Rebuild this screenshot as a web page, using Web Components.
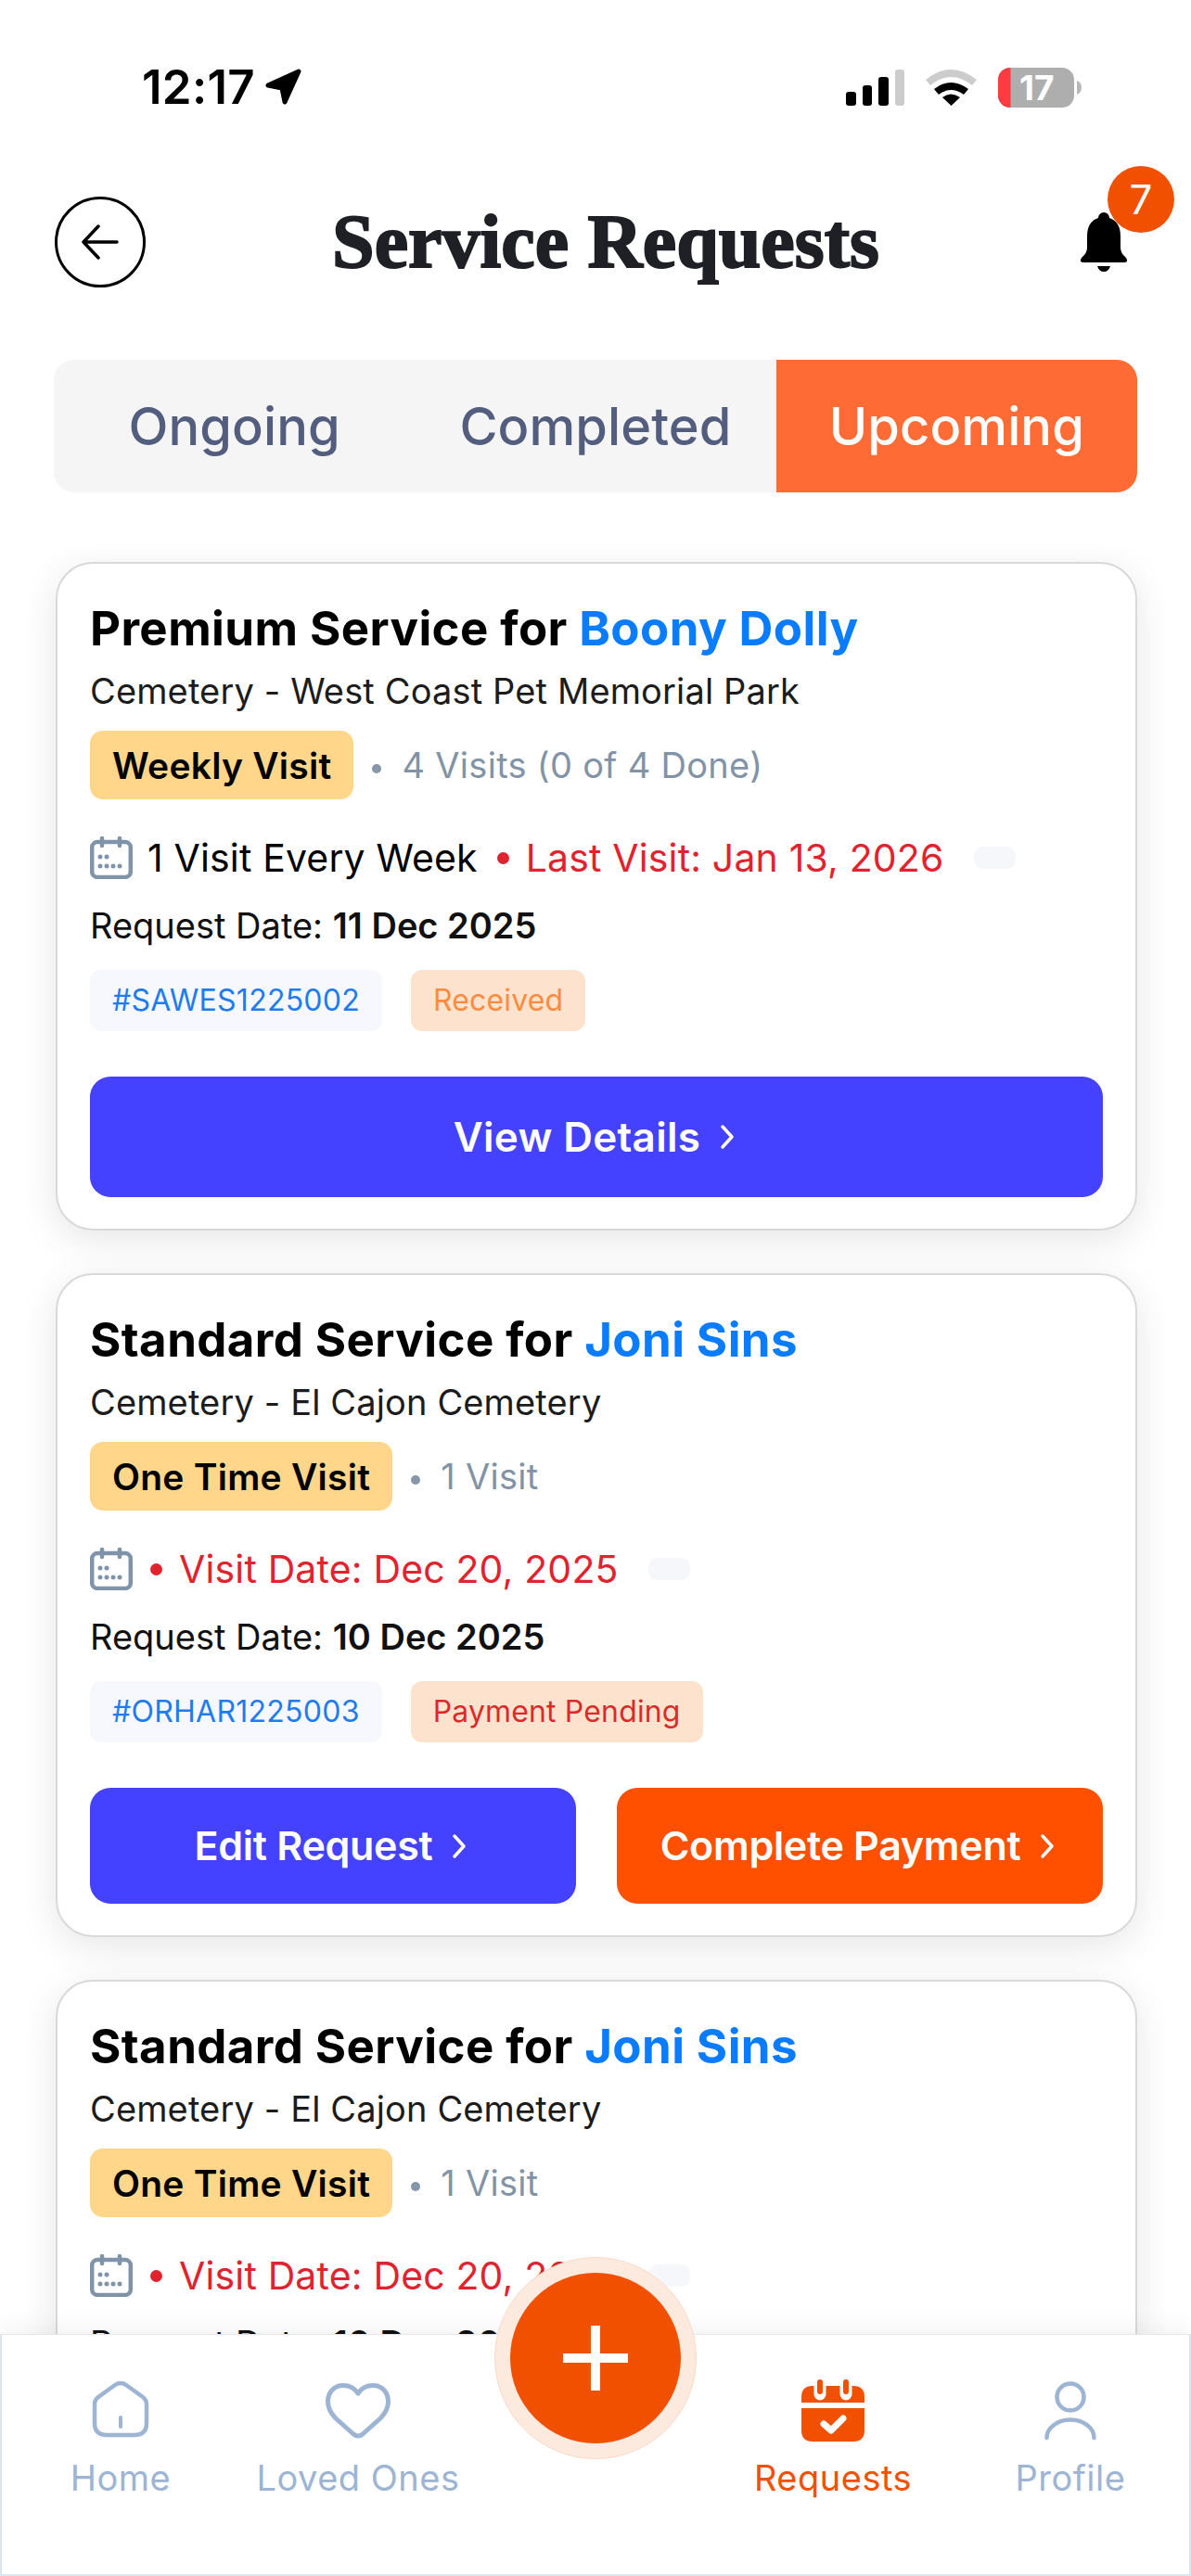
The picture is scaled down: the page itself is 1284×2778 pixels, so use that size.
<!DOCTYPE html>
<html lang="en"><head><meta charset="utf-8"><title>Service Requests</title>
<style>
html,body{margin:0;padding:0;background:#fff}
body{font-family:Inter,"Noto Sans",sans-serif;color:#111}
</style></head><body>
<app-screen>
  <status-bar></status-bar>
  <app-header title="Service Requests" count="7"></app-header>
  <seg-tabs></seg-tabs>
  <card-list>
    <request-card plan="Premium Service for " name="Boony Dolly" place="Cemetery - West Coast Pet Memorial Park" chip="Weekly Visit" visits="4 Visits (0 of 4 Done)" every="1 Visit Every Week" red="Last Visit: Jan 13, 2026" date="11 Dec 2025" code="#SAWES1225002" state="Received" state-color="#fb8b3e">
      <action-button big>View Details</action-button>
    </request-card>
    <request-card plan="Standard Service for " name="Joni Sins" place="Cemetery - El Cajon Cemetery" chip="One Time Visit" visits="1 Visit" red="Visit Date: Dec 20, 2025" date="10 Dec 2025" code="#ORHAR1225003" state="Payment Pending" state-color="#d92b2b">
      <action-button>Edit Request</action-button>
      <action-button color="#ff5000">Complete Payment</action-button>
    </request-card>
    <request-card plan="Standard Service for " name="Joni Sins" place="Cemetery - El Cajon Cemetery" chip="One Time Visit" visits="1 Visit" red="Visit Date: Dec 20, 2025" date="10 Dec 2025" code="#ORHAR1225003" state="Payment Pending" state-color="#d92b2b">
      <action-button>Edit Request</action-button>
      <action-button color="#ff5000">Complete Payment</action-button>
    </request-card>
  </card-list>
  <bottom-nav>
    <nav-item label="Home"><svg viewBox="0 0 66 64" width="66" height="64" fill="none" stroke="#9db4d3" stroke-width="4.500" stroke-linejoin="round" stroke-linecap="round"><path d="M5 25 Q5 20 9 17 L27 4 Q33 0 39 4 L57 17 Q61 20 61 25 V45 Q61 58 48 58 H18 Q5 58 5 45Z"/><path d="M33 39V49" stroke-width="4"/></svg></nav-item>
    <nav-item label="Loved Ones"><svg viewBox="0 0 72 62" width="72" height="62" fill="none" stroke="#9db4d3" stroke-width="5" stroke-linejoin="round"><path d="M36 12 C32 6 26 3.500 20 3.500 C10 3.500 3.500 11 3.500 21 C3.500 29 7 34 12 39 L31 56 Q36 60 41 56 L60 39 C65 34 68.500 29 68.500 21 C68.500 11 62 3.500 52 3.500 C46 3.500 40 6 36 12Z"/></svg></nav-item>
    <nav-item></nav-item>
    <nav-item label="Requests" active><svg viewBox="0 0 68 68" width="68" height="68"><path fill="#f15000" d="M12 7H56Q68 7 68 19V25H0V19Q0 7 12 7ZM0 31H68V55Q68 67 56 67H12Q0 67 0 55Z"/><path d="M20 4V16M48 4V16" stroke="#fff" stroke-width="13" stroke-linecap="round"/><path d="M20 3V13M48 3V13" stroke="#f15000" stroke-width="6" stroke-linecap="round"/><path d="M24 48L32 55L45 42" fill="none" stroke="#fff" stroke-width="7" stroke-linecap="round" stroke-linejoin="round"/></svg></nav-item>
    <nav-item label="Profile"><svg viewBox="0 0 56 64" width="56" height="64" fill="none" stroke="#9db4d3" stroke-width="4.500" stroke-linecap="round"><circle cx="28" cy="17" r="14.500"/><path d="M2.500 61A25.500 19.500 0 0 1 53.500 61"/></svg></nav-item>
  </bottom-nav>
  <fab-button></fab-button>
</app-screen>
<script>
const def=(name,css,html)=>customElements.define(name,class extends HTMLElement{
  connectedCallback(){
    if(this.shadowRoot)return;
    const a=n=>this.getAttribute(n)||'';
    const r=this.attachShadow({mode:'open'});
    r.innerHTML='<style>'+css+'</style>'+(typeof html==='function'?html(a,this):html);
  }
});
def('app-screen',`:host{display:block;position:relative;width:1284px;height:2778px;overflow:hidden;background:#fff}`,`<slot></slot>`);
def('status-bar',`:host{display:flex;justify-content:space-between;align-items:center;height:120px;padding:68px 118px 0 153px;box-sizing:border-box}
.l,.r{display:flex;align-items:center}
.t{font:600 51px/56px Inter,sans-serif;letter-spacing:.3px;color:#000}
.l svg{margin-left:11px}
.r{gap:23px}
.bat{position:relative;width:90px;height:43px}
.bat b{position:absolute;left:14px;top:0;width:66px;height:43px;font:700 37px/43px Inter,sans-serif;color:#fff;text-align:left;padding-left:9px;box-sizing:border-box}`,
`<div class="l"><span class="t">12:17</span><svg width="42" height="42" viewBox="0 0 42 42"><path d="M3 19L36 4L21 37L18 22Z" fill="#000" stroke="#000" stroke-width="5" stroke-linejoin="round"/></svg></div>
<div class="r">
<svg width="63" height="39" viewBox="0 0 63 39"><rect x="0" y="24" width="11" height="15" rx="3"/><rect x="18" y="17" width="10" height="22" rx="3"/><rect x="35" y="8" width="11" height="31" rx="3"/><rect x="53" y="0" width="10" height="39" rx="3" fill="#ccc"/></svg>
<svg width="55" height="40" viewBox="0 0 55 40"><path d="M0 12 Q27 -10 55 12 L50 18 Q27 0 5 18Z" fill="#ccc"/><path d="M9 22 Q27 8 46 22 L41 28 Q27 18 14 28Z"/><path d="M18 31 Q27 24 37 31 L27.500 40Z"/></svg>
<div class="bat"><svg width="90" height="43" viewBox="0 0 90 43"><rect x="0" y="0" width="82" height="43" rx="13" fill="#aeaeae"/><path d="M13 0H13.500V43H13A13 13 0 0 1 0 30V13A13 13 0 0 1 13 0Z" fill="#ff3b41"/><path d="M85 14Q90 16 90 21Q90 27 85 29Z" fill="#b8b8b8"/></svg><b>17</b></div>
</div>`);
def('app-header',`:host{display:block;height:268px}
.row{display:grid;grid-template-columns:100px 1fr 100px;align-items:center;padding:91px 44px 0 58px}
.back{width:98px;height:98px;margin-left:1px;box-sizing:border-box;border:3px solid #000;border-radius:50%;display:flex;align-items:center;justify-content:center}
h1{margin:0;padding-left:8px;text-align:center;font:700 82px/100px "Liberation Serif",serif;color:#1e2025;-webkit-text-stroke:2px #1e2025;white-space:nowrap}
.bell{position:relative;justify-self:center;width:52px;height:64px}
.badge{position:absolute;left:30px;top:-50px;width:72px;height:72px;border-radius:50%;background:#f05000;color:#fff;font:400 44px/72px Inter,sans-serif;text-align:center}`,
(a)=>`<div class="row"><div class="back"><svg width="44" height="40" viewBox="0 0 44 40" fill="none" stroke="#000" stroke-width="3.500" stroke-linecap="round" stroke-linejoin="round"><path d="M40 20H5M20 3L4 20L20 37"/></svg></div><h1>${a('title')}</h1>
<div class="bell"><svg width="52" height="64" viewBox="0 0 52 64"><path d="M26 0a6 6 0 0 1 6 6 Q44 10 44 26V38Q44 44 50 49Q53 54 48 54H4Q-1 54 2 49Q8 44 8 38V26Q8 10 20 6a6 6 0 0 1 6-6Z"/><path d="M19 58H33Q31 64 26 64Q21 64 19 58Z"/></svg><div class="badge">${a('count')}</div></div></div>`);
def('seg-tabs',`:host{display:grid;grid-template-columns:repeat(3,1fr);margin:0 58px;height:143px;background:#f5f5f5;border-radius:22px;overflow:hidden}
span{display:flex;align-items:center;justify-content:center;font:500 56px/1 Inter,sans-serif;color:#535d7e;letter-spacing:.1px}
.on{background:#ff6b35;color:#fff}`,`<span>Ongoing</span><span>Completed</span><span class="on">Upcoming</span>`);
def('card-list',`:host{display:flex;flex-direction:column;gap:46px;margin:57px 28px 0;padding:18px 30px 60px 32px;overflow:hidden;height:2190px;box-sizing:border-box}`,`<slot></slot>`);
def('request-card',`:host{display:block;flex:none;background:#fff;border:2px solid #d9d9d9;border-radius:40px;padding:35px 35px 34px;box-shadow:0 10px 42px rgba(0,0,0,.1)}
.title{font:700 51px/70px Inter,sans-serif;color:#000;letter-spacing:.4px;white-space:nowrap}
.title b{color:#0a7cff;font-weight:700}
.place{font:400 38px/50px Inter,sans-serif;color:#1c1c1c;letter-spacing:.14px;margin-top:7px}
.chips{display:flex;align-items:center;margin-top:18px;height:74px}
.chip{background:#ffd68a;border-radius:14px;padding:0 24px;height:74px;display:flex;align-items:center;font:600 39px/1 Inter,sans-serif;color:#000;letter-spacing:.25px;white-space:nowrap}
.dot{width:10px;height:10px;border-radius:50%;flex:none}
.chips .dot{background:#8597a8;margin:8px 22px 0 20px}
.vis{font:400 38px/1 Inter,sans-serif;color:#8293a6;letter-spacing:.3px}
.when{display:flex;align-items:center;margin-top:38px;height:50px;font:400 41px/50px Inter,sans-serif;white-space:nowrap;letter-spacing:.15px;color:#000}
.when svg{flex:none;margin-right:16px}
.when .dot{background:#e0232e;width:13px;height:13px;margin:0 18px 0 3px}
.when span+.dot{margin-left:21px}
.red{color:#e0232e}
.pill{width:45px;height:24px;border-radius:10px;background:#f5f7fb;margin-left:32px}
.req{font:400 38px/50px Inter,sans-serif;color:#111;margin-top:23px;letter-spacing:0}
.req b{font-weight:600}
.tags{display:flex;gap:31px;margin-top:23px}
.tag{height:66px;display:flex;align-items:center;padding:0 24px;border-radius:12px;font:400 32px/1 Inter,sans-serif;letter-spacing:.15px}
.code{background:#f6f8fd;color:#1f7cf0;letter-spacing:.25px}
.state{background:#fde3cd}
.acts{display:flex;gap:44px;margin-top:49px}`,
(a,el)=>{const e=el.getAttribute('every');return `<div class="title">${a('plan')}<b>${a('name')}</b></div>
<div class="place">${a('place')}</div>
<div class="chips"><span class="chip">${a('chip')}</span><span class="dot"></span><span class="vis">${a('visits')}</span></div>
<div class="when"><svg width="46" height="46" viewBox="0 0 46 46" fill="none" stroke="#7f94a8" stroke-width="4.500"><rect x="2.200" y="6" width="41.600" height="38" rx="6"/><path d="M13 2V10M32 2V10" stroke-linecap="round"/><g fill="#7f94a8" stroke="none"><circle cx="11" cy="22" r="2.500"/><circle cx="18" cy="22" r="2.500"/><circle cx="11" cy="32" r="2.500"/><circle cx="18" cy="32" r="2.500"/><circle cx="25" cy="32" r="2.500"/><circle cx="32" cy="32" r="2.500"/></g></svg>${e?`<span>${e}</span>`:''}<span class="dot"></span><span class="red">${a('red')}</span><span class="pill"></span></div>
<div class="req">Request Date: <b>${a('date')}</b></div>
<div class="tags"><span class="tag code">${a('code')}</span><span class="tag state" style="color:${a('state-color')}">${a('state')}</span></div>
<div class="acts"><slot></slot></div>`});
def('action-button',`:host{flex:1;display:flex;align-items:center;justify-content:center;gap:21px;height:125px;padding-right:5px;box-sizing:border-box;border-radius:22px;font:600 43px/1 Inter,sans-serif;color:#fff;letter-spacing:-.3px;white-space:nowrap}
:host([big]){height:130px;font-size:44px;letter-spacing:.3px}`,
(a,el)=>{el.style.background=a('color')||'#4441ff';return `<slot></slot><svg width="16" height="28" viewBox="0 0 16 28" fill="none" stroke="#fff" stroke-width="3.500" stroke-linecap="round" stroke-linejoin="round"><path d="M3 3L13 14L3 25"/></svg>`});
def('bottom-nav',`:host{position:absolute;left:0;right:0;bottom:0;height:261px;box-sizing:border-box;background:#fff;border:2px solid #dde6ee;border-top:1px solid #e6e6e6;display:grid;grid-template-columns:repeat(5,1fr);box-shadow:0 -8px 24px rgba(0,0,0,.05)}`,`<slot></slot>`);
def('nav-item',`:host{display:flex;flex-direction:column;align-items:center;padding-top:48px;color:#9db4d3;font:400 38px/1 Inter,sans-serif;letter-spacing:.5px;white-space:nowrap}
.ic{height:68px;display:flex;align-items:center;justify-content:center}
.lb{margin-top:19px}
:host([active]){color:#f15000}`,(a)=>`<div class="ic"><slot></slot></div><div class="lb">${a('label')}</div>`);
def('fab-button',`:host{position:absolute;left:533px;top:2434px;width:218px;height:218px;box-sizing:border-box;border-radius:50%;background:#fdeade;border:1px solid #fbd9c6;display:flex;align-items:center;justify-content:center}
div{width:184px;height:184px;border-radius:50%;background:#f05000;display:flex;align-items:center;justify-content:center}`,
`<div><svg width="72" height="72" viewBox="0 0 72 72"><path d="M31 1H41V31H71V41H41V71H31V41H1V31H31Z" fill="#fff"/></svg></div>`);
</script>
</body></html>
